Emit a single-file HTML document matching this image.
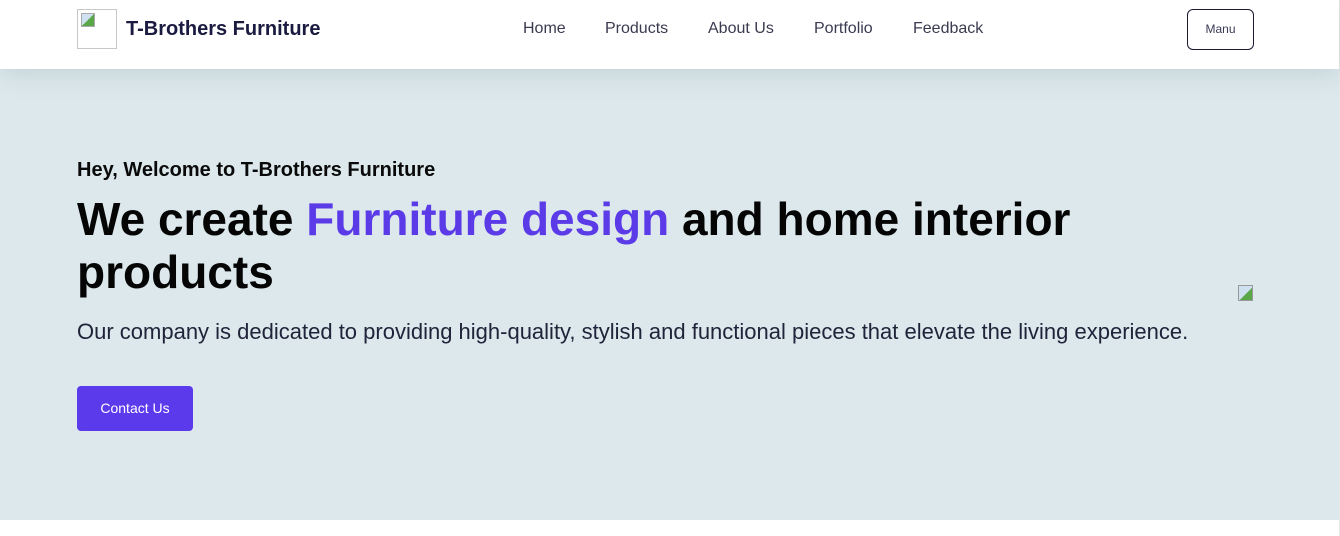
<!DOCTYPE html>
<html><head><meta charset="utf-8"><style>
*{margin:0;padding:0;box-sizing:border-box}
html,body{width:1340px;height:536px;overflow:hidden;background:#fff;font-family:"Liberation Sans",Arial,sans-serif}
.hdr{position:absolute;left:0;top:0;width:1339px;height:69px;background:#fff;z-index:2;box-shadow:0 4px 24px rgba(120,140,150,.25)}
.logo{position:absolute;left:77px;top:9px;width:40px;height:40px;border:1px solid #c8c8c8}
.logo i{position:absolute;left:3px;top:3px;width:14px;height:14px;background:linear-gradient(135deg,#cfe0f0 50%,#5aa74a 50%);border:1px solid #aaa}
.brand{position:absolute;left:126px;top:18px;font-size:20px;font-weight:bold;color:#1b1a40}
.nav a{position:absolute;top:20px;font-size:16px;color:#3a3a50;text-decoration:none}
.menu{position:absolute;left:1187px;top:9px;width:67px;height:41px;border:1px solid #1b1a30;border-radius:6px;font-size:12px;color:#3a3a55;text-align:center;line-height:39px}
.hero{position:absolute;left:0;top:69px;width:1339px;height:451px;background:#dce8ec}
.vr{position:absolute;left:1339px;top:0;width:1px;height:536px;background:#e8e8e8}
.h3{position:absolute;left:77px;top:159px;font-size:20px;font-weight:bold;color:#0a0a0a}
.h1{position:absolute;left:77px;top:193px;font-size:46px;font-weight:bold;color:#050505;line-height:53px;width:1100px}
.h1 span{color:#5b3be8}
.p{position:absolute;left:77px;top:319px;font-size:22px;color:#20243a}
.btn{position:absolute;left:77px;top:386px;width:116px;height:45px;background:#5b3aec;border-radius:4px;color:#fff;font-size:14px;text-align:center;line-height:45px}
.img2{position:absolute;left:1238px;top:285px;width:15px;height:16px;background:linear-gradient(135deg,#cfe0f0 55%,#5aa74a 55%);border:1px solid #999}
</style></head><body>
<div class="hero"></div>
<div class="hdr">
<div class="logo"><i></i></div>
<div class="brand">T-Brothers Furniture</div>
<div class="nav"><a style="left:523px">Home</a><a style="left:605px">Products</a><a style="left:708px">About Us</a><a style="left:814px">Portfolio</a><a style="left:913px">Feedback</a></div>
<div class="menu">Manu</div>
</div>
<div class="h3">Hey, Welcome to T-Brothers Furniture</div>
<div class="h1">We create <span>Furniture design</span> and home interior products</div>
<div class="p">Our company is dedicated to providing high-quality, stylish and functional pieces that elevate the living experience.</div>
<div class="btn">Contact Us</div>
<div class="img2"></div>
<div class="vr"></div>
</body></html>
